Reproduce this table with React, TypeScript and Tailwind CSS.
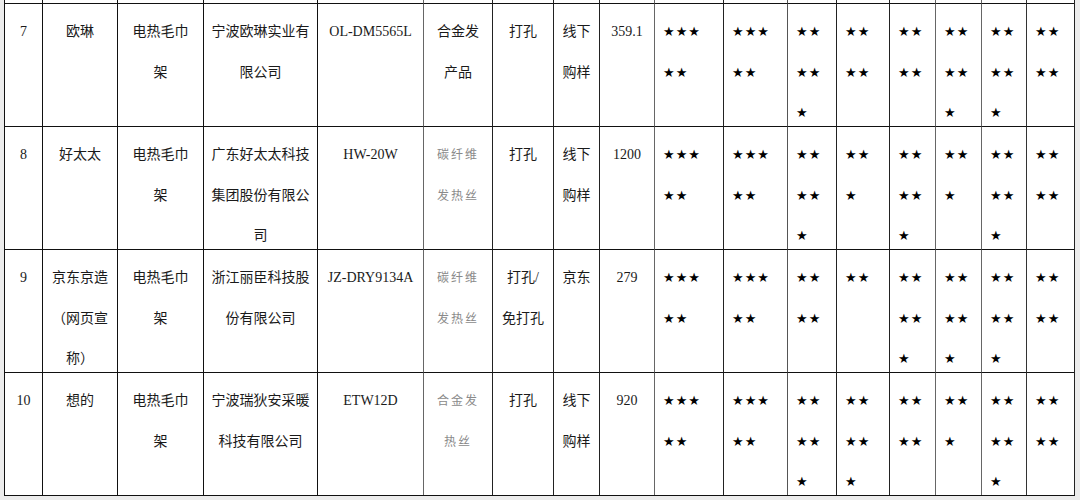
import React from "react";

type Row = {
  no: string;
  brand: string[];
  kind: string[];
  company: string[];
  model: string;
  heat: string[];
  heatGray?: boolean;
  install: string[];
  channel: string[];
  price: string;
  stars: string[][];
};

const rows: Row[] = [
  {
    no: "7",
    brand: ["欧琳"],
    kind: ["电热毛巾", "架"],
    company: ["宁波欧琳实业有", "限公司"],
    model: "OL-DM5565L",
    heat: ["合金发", "产品"],
    install: ["打孔"],
    channel: ["线下", "购样"],
    price: "359.1",
    stars: [
      ["★★★", "★★"],
      ["★★★", "★★"],
      ["★★", "★★", "★"],
      ["★★", "★★"],
      ["★★", "★★"],
      ["★★", "★★", "★"],
      ["★★", "★★", "★"],
      ["★★", "★★"],
    ],
  },
  {
    no: "8",
    brand: ["好太太"],
    kind: ["电热毛巾", "架"],
    company: ["广东好太太科技", "集团股份有限公", "司"],
    model: "HW-20W",
    heat: ["碳纤维", "发热丝"],
    heatGray: true,
    install: ["打孔"],
    channel: ["线下", "购样"],
    price: "1200",
    stars: [
      ["★★★", "★★"],
      ["★★★", "★★"],
      ["★★", "★★", "★"],
      ["★★", "★"],
      ["★★", "★★", "★"],
      ["★★", "★"],
      ["★★", "★★", "★"],
      ["★★", "★★"],
    ],
  },
  {
    no: "9",
    brand: ["京东京造", "（网页宣", "称）"],
    kind: ["电热毛巾", "架"],
    company: ["浙江丽臣科技股", "份有限公司"],
    model: "JZ-DRY9134A",
    heat: ["碳纤维", "发热丝"],
    heatGray: true,
    install: ["打孔/", "免打孔"],
    channel: ["京东"],
    price: "279",
    stars: [
      ["★★★", "★★"],
      ["★★★", "★★"],
      ["★★", "★★"],
      ["★★"],
      ["★★", "★★", "★"],
      ["★★", "★★", "★"],
      ["★★", "★★", "★"],
      ["★★", "★★"],
    ],
  },
  {
    no: "10",
    brand: ["想的"],
    kind: ["电热毛巾", "架"],
    company: ["宁波瑞狄安采暖", "科技有限公司"],
    model: "ETW12D",
    heat: ["合金发", "热丝"],
    heatGray: true,
    install: ["打孔"],
    channel: ["线下", "购样"],
    price: "920",
    stars: [
      ["★★★", "★★"],
      ["★★★", "★★"],
      ["★★", "★★", "★"],
      ["★★", "★★", "★"],
      ["★★", "★★"],
      ["★★", "★"],
      ["★★", "★★", "★"],
      ["★★", "★★"],
    ],
  },
];

// line colour per column (some rules in the scan look lighter)
const lineColors = [
  "border-l-[#111]",
  "border-l-[#111]",
  "border-l-[#111]",
  "border-l-[#111]",
  "border-l-[#111]",
  "border-l-[#666]",
  "border-l-[#222]",
  "border-l-[#222]",
  "border-l-[#222]",
  "border-l-[#666]",
  "border-l-[#222]",
  "border-l-[#555]",
  "border-l-[#222]",
  "border-l-[#222]",
  "border-l-[#666]",
  "border-l-[#666]",
  "border-l-[#333]",
];

const gridCols =
  "grid grid-cols-[38px_75px_86px_114px_106px_69px_61px_46px_55px_69px_64px_49px_53px_46px_46px_45px_48px]";

const serif = "font-['Liberation_Serif','Noto_Sans_CJK_SC',serif]";

function TextCell({ lines, col, gray }: { lines: string[]; col: number; gray?: boolean }) {
  return (
    <div
      className={`overflow-hidden border-l border-t border-t-[#111] ${lineColors[col]} pt-[8px] text-center leading-[40.5px] ${
        gray ? "text-[12px] tracking-[2px] text-[#8a8a8a]" : "text-[14px] text-[#1a1a1a]"
      }`}
    >
      {lines.map((l, i) => (
        <div key={i} className="whitespace-nowrap">
          {l}
        </div>
      ))}
    </div>
  );
}

function StarCell({ lines, col }: { lines: string[]; col: number }) {
  return (
    <div
      className={`overflow-hidden border-l border-t border-t-[#111] ${lineColors[col]} pl-[8px] pt-[8px] leading-[40.5px] text-[13px] tracking-[1px] text-black font-['DejaVu_Sans',sans-serif]`}
    >
      {lines.map((l, i) => (
        <div key={i} className="whitespace-nowrap">
          {l}
        </div>
      ))}
    </div>
  );
}

export default function App() {
  return (
    <div className={`w-[1080px] h-[500px] overflow-hidden bg-[#ececec] ${serif}`}>
      <div className="ml-[4px] w-[1071px] bg-white border-r border-r-[#222] border-b border-b-[#111]">
        {/* tail of the previous row */}
        <div className={`${gridCols} grid-rows-[3px]`}>
          {lineColors.map((c, i) => (
            <div key={i} className={`border-l ${c}`} />
          ))}
        </div>
        {rows.map((r) => (
          <div key={r.no} className={`${gridCols} grid-rows-[123px]`}>
            <TextCell col={0} lines={[r.no]} />
            <TextCell col={1} lines={r.brand} />
            <TextCell col={2} lines={r.kind} />
            <TextCell col={3} lines={r.company} />
            <TextCell col={4} lines={[r.model]} />
            <TextCell col={5} lines={r.heat} gray={r.heatGray} />
            <TextCell col={6} lines={r.install} />
            <TextCell col={7} lines={r.channel} />
            <TextCell col={8} lines={[r.price]} />
            {r.stars.map((s, i) => (
              <StarCell key={i} col={9 + i} lines={s} />
            ))}
          </div>
        ))}
      </div>
    </div>
  );
}
